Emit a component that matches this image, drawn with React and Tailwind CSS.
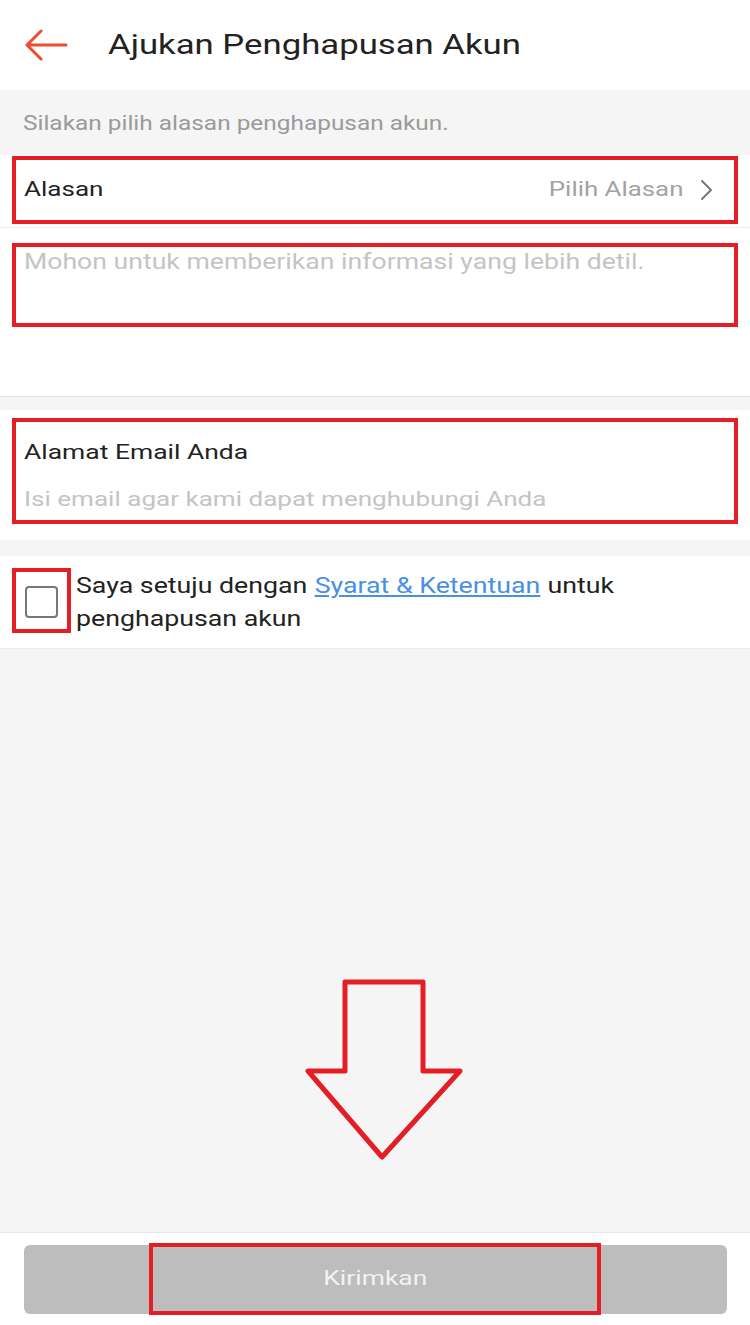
export default function App() {
  return (
    <div className="flex h-[1325px] w-[750px] flex-col overflow-hidden bg-[#f5f5f5] font-['Roboto',sans-serif]">
      {/* Header */}
      <header className="flex h-[90px] items-center bg-white">
        <svg width="44" height="32" viewBox="0 0 44 32" className="ml-[24px]" fill="none">
          <path d="M42 16H3M17 2L3 16l14 14" stroke="#ee4d2d" strokeWidth="3" strokeLinecap="round" strokeLinejoin="round" />
        </svg>
        <h1 className="ml-[40px] origin-left scale-x-[1.24] text-[28px] leading-none text-[#222]">Ajukan Penghapusan Akun</h1>
      </header>

      {/* Hint */}
      <div className="flex h-[65px] items-center px-[23px]">
        <span className="origin-left scale-x-[1.22] text-[20px] text-[#9a9a9a]">Silakan pilih alasan penghapusan akun.</span>
      </div>

      {/* Reason row */}
      <div className="bg-white px-[12px] pt-px pb-[3px]">
        <div className="flex h-[68px] items-center justify-between border-4 border-[#e31e24] pl-[8px] pr-[20px]">
          <span className="origin-left scale-x-[1.24] text-[21px] text-[#222]">Alasan</span>
          <span className="flex items-center gap-[17px]">
            <span className="origin-right scale-x-[1.23] text-[21px] text-[#a3a3a3]">Pilih Alasan</span>
            <svg width="14" height="22" viewBox="0 0 14 22" fill="none">
              <path d="M2 2l9 9-9 9" stroke="#777" strokeWidth="2" strokeLinecap="round" strokeLinejoin="round" />
            </svg>
          </span>
        </div>
      </div>

      {/* Detail textarea */}
      <div className="h-[169px] border-t border-[#ececec] bg-white px-[12px] pt-[15px]">
        <div className="h-[84px] border-4 border-[#e31e24] pl-[8px]">
          <p className="origin-left scale-x-[1.21] text-[22px] leading-[30px] text-[#c4c4c4]">Mohon untuk memberikan informasi yang lebih detil.</p>
        </div>
      </div>

      <div className="h-[14px] border-t border-[#e2e2e2]" />

      {/* Email */}
      <div className="h-[130px] bg-white px-[12px] pt-[8px]">
        <div className="flex h-[106px] flex-col items-start border-4 border-[#e31e24] pl-[8px] pt-[17px]">
          <span className="origin-left scale-x-[1.26] text-[21px] leading-[26px] text-[#222]">Alamat Email Anda</span>
          <span className="mt-[21px] origin-left scale-x-[1.24] text-[21px] leading-[26px] text-[#c4c4c4]">Isi email agar kami dapat menghubungi Anda</span>
        </div>
      </div>

      <div className="h-[16px]" />

      {/* Agreement */}
      <div className="flex h-[92px] items-start bg-white pl-[12px] pt-[12px]">
        <div className="flex h-[65px] w-[59px] shrink-0 items-center justify-center border-4 border-[#e31e24]">
          <div className="mt-[3px] h-[32px] w-[33px] rounded-[4px] border-2 border-[#777]" />
        </div>
        <div className="ml-[5px] mt-[1px] flex origin-left scale-x-[1.215] flex-col text-[22px] leading-[33px] text-[#222]">
          <div className="flex gap-[6px]">
            <span>Saya setuju dengan</span>
            <span className="text-[#4a90e2] underline underline-offset-2">Syarat &amp; Ketentuan</span>
            <span>untuk</span>
          </div>
          <span>penghapusan akun</span>
        </div>
      </div>

      {/* Empty area with arrow */}
      <div className="flex flex-1 flex-col items-center border-t border-[#ececec] pt-[330px]">
        <svg width="162" height="184" viewBox="0 0 162 184" className="ml-[20px]" fill="none">
          <path d="M41 3H119V92H156L78 178L4 92H41Z" stroke="#e31e24" strokeWidth="5" strokeLinejoin="round" />
        </svg>
      </div>

      {/* Bottom bar */}
      <div className="flex h-[93px] items-center justify-center border-t border-[#e6e6e6] bg-white">
        <div className="flex h-[69px] w-[703px] items-center justify-center rounded-[6px] bg-[#bdbdbd]">
          <div className="flex h-[72px] w-[452px] items-center justify-center border-4 border-[#e31e24]">
            <span className="scale-x-[1.26] text-[21px] text-[#f2f2f2]">Kirimkan</span>
          </div>
        </div>
      </div>
    </div>
  );
}
